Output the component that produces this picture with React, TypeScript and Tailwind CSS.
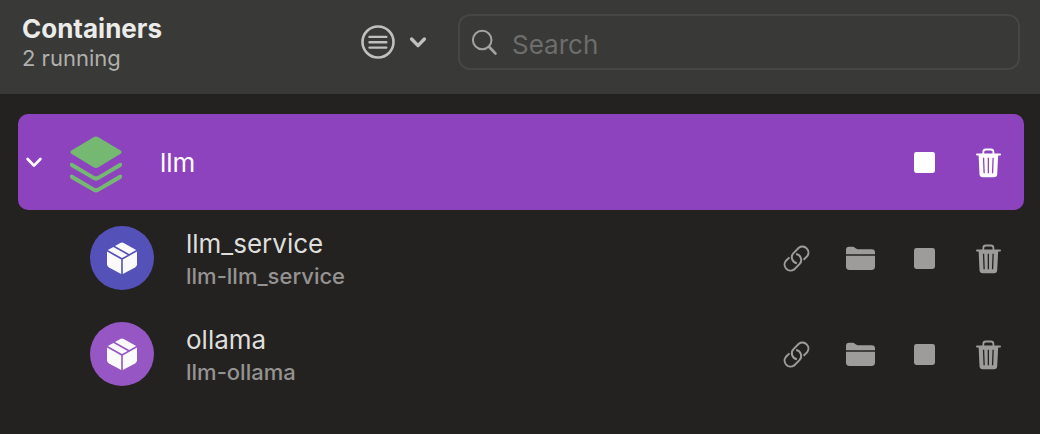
import React from "react";

type IconProps = { className?: string };

function FilterIcon() {
  return (
    <svg width="36" height="36" viewBox="0 0 36 36" fill="none" stroke="currentColor" strokeLinecap="round" aria-hidden="true">
      <circle cx="18" cy="18" r="15.5" strokeWidth="2.6" />
      <path d="M9.5 12.9h16.8M9.5 18.3h16.8M9.5 23.6h16.8" strokeWidth="2.4" />
    </svg>
  );
}

function ChevronIcon({ weight }: { weight: number }) {
  return (
    <svg width="18" height="18" viewBox="0 0 18 18" fill="none" stroke="currentColor" strokeLinecap="round" strokeLinejoin="round" strokeWidth={weight} aria-hidden="true">
      <path d="M2.6 6 9 12.6l6.4-6.6" />
    </svg>
  );
}

function SearchIcon() {
  return (
    <svg width="28" height="28" viewBox="0 0 28 28" fill="none" stroke="currentColor" strokeLinecap="round" aria-hidden="true">
      <circle cx="12.2" cy="12" r="9.3" strokeWidth="2" />
      <path d="M19.2 19l6.2 6.4" strokeWidth="2.8" />
    </svg>
  );
}

function StackIcon() {
  return (
    <svg width="56" height="60" viewBox="0 0 56 60" fill="#74b872" aria-hidden="true">
      <path d="M25.6 3.2Q28 1.8 30.4 3.2L52.6 16.5Q54.6 18 52.6 19.8L30.4 33.2Q28 34.6 25.6 33.2L3.4 19.8Q1.4 18 3.4 16.5Z" />
      <path d="M2 29.4Q3.2 28.2 5 29.2L26.3 41.9Q28 42.8 29.7 41.9L51 29.2Q52.8 28.2 54 29.4V31.2Q54 32.3 52.8 33.1L30.4 46Q28 47.4 25.6 46L3.2 33.1Q2 32.3 2 31.2Z" />
      <path d="M2 41.2Q3.2 40 5 41L26.3 53.7Q28 54.6 29.7 53.7L51 41Q52.8 40 54 41.2V43Q54 44.1 52.8 44.9L30.4 57.8Q28 59.2 25.6 57.8L3.2 44.9Q2 44.1 2 43Z" />
    </svg>
  );
}

function BoxIcon() {
  return (
    <svg width="32" height="34" viewBox="0 0 32 34" fill="#fafafa" aria-hidden="true">
      <path d="M1 10.6 15.2 18.4V33L3 26.4Q1 25.3 1 23.2Z" />
      <path d="M31 10.6 16.8 18.4V33L29 26.4Q31 25.3 31 23.2Z" />
      <path d="M1.8 9 7.4 5.9 21.6 13.9 16 17Z" />
      <path d="M9 5 14.3 2Q16 1 17.7 2L30.2 9 23.2 13Z" />
    </svg>
  );
}

function LinkIcon({ className }: IconProps) {
  return (
    <svg width="32" height="32" viewBox="0 0 32 32" className={className} fill="none" stroke="currentColor" strokeWidth="2" aria-hidden="true">
      <path d="M23.6 17.8 27.2 14.2A6 6 0 0 0 18.8 5.8L13.5 11.1A6 6 0 0 0 16.9 21.2" />
      <path d="M9.4 15.4 5.8 19A6 6 0 0 0 14.2 27.4L19.5 22.1A6 6 0 0 0 16.1 12" />
    </svg>
  );
}

function FolderIcon({ className }: IconProps) {
  return (
    <svg width="32" height="32" viewBox="0 0 32 32" className={className} fill="currentColor" aria-hidden="true">
      <path d="M2 12.2V7.8Q2 4.8 5 4.8H8.6Q10 4.8 11 5.7L12 6.5Q12.8 7.2 14 7.2H27.8Q31 7.2 31 10.2V12.2Z" />
      <path d="M2 13.8H31V24.6Q31 28 27.6 28H5.4Q2 28 2 24.6Z" />
    </svg>
  );
}

function StopIcon({ className }: IconProps) {
  return (
    <svg width="32" height="32" viewBox="0 0 32 32" className={className} fill="currentColor" aria-hidden="true">
      <rect x="6" y="6" width="21" height="21" rx="2.4" />
    </svg>
  );
}

function TrashIcon({ className }: IconProps) {
  return (
    <svg width="32" height="32" viewBox="0 0 32 32" className={className} aria-hidden="true">
      <path d="M11.3 8V6Q11.3 3.5 13.8 3.5H18.9Q21.4 3.5 21.4 6V8" fill="none" stroke="currentColor" strokeWidth="1.8" />
      <path d="M5 8.6h23" stroke="currentColor" strokeWidth="2" strokeLinecap="round" />
      <path
        fill="currentColor"
        fillRule="evenodd"
        d="M6.6 8.6H26.2L25.2 28.2Q25 31.2 22 31.2H10.7Q7.7 31.2 7.5 28.2ZM10.9 11.7 11.5 27.2h1.3L12.2 11.7ZM15.7 11.7V27.2H17V11.7ZM20.5 11.7 19.9 27.2h1.3L21.8 11.7Z"
      />
    </svg>
  );
}

function IconButton({ label, children }: { label: string; children: React.ReactNode }) {
  return (
    <button type="button" aria-label={label} title={label} className="flex size-8 items-center justify-center">
      {children}
    </button>
  );
}

type Container = { name: string; image: string; tint: string };

const containers: Container[] = [
  { name: "llm_service", image: "llm-llm_service", tint: "bg-[#5452b8]" },
  { name: "ollama", image: "llm-ollama", tint: "bg-[#9656c4]" },
];

function ContainerRow({ name, image, tint }: Container) {
  return (
    <li className="flex h-24 items-center pr-5 pl-[72px]">
      <span className={`flex size-16 shrink-0 items-center justify-center rounded-full ${tint}`}>
        <BoxIcon />
      </span>
      <div className="ml-8 min-w-0 flex-1 pt-1">
        <p className="truncate text-[26px] leading-8 text-[#dededc]">{name}</p>
        <p className="truncate text-[22px] leading-8 font-medium text-[#949391]">{image}</p>
      </div>
      <div className="flex gap-8 text-[#9d9c9a]">
        <IconButton label={`Open ${name} link`}>
          <LinkIcon />
        </IconButton>
        <IconButton label={`Open ${name} files`}>
          <FolderIcon />
        </IconButton>
        <IconButton label={`Stop ${name}`}>
          <StopIcon />
        </IconButton>
        <IconButton label={`Delete ${name}`}>
          <TrashIcon />
        </IconButton>
      </div>
    </li>
  );
}

export default function App() {
  return (
    <div className="min-h-screen bg-[#242220] font-['Inter','Liberation_Sans',sans-serif]">
      <header className="flex h-[94px] items-start bg-[#393937] pr-5 pl-[22px]">
        <div className="w-[338px] shrink-0 pt-[14px]">
          <h1 className="text-[26px] leading-[30px] font-bold text-[#ebebe9]">Containers</h1>
          <p className="text-[22px] leading-7 text-[#b0b0ae]">2 running</p>
        </div>
        <button type="button" aria-label="Filter containers" className="mt-6 flex shrink-0 items-center gap-[13px] text-[#c0c0be]">
          <FilterIcon />
          <ChevronIcon weight={3.4} />
        </button>
        <label className="mt-[14px] ml-[31px] flex h-14 min-w-0 flex-1 items-center gap-[14px] rounded-xl border-2 border-[#464644] pr-3 pl-[10px] text-[#a3a3a1]">
          <SearchIcon />
          <input
            type="search"
            aria-label="Search"
            placeholder="Search"
            className="min-w-0 flex-1 bg-transparent pt-1 text-[26px] text-[#ebebe9] outline-none placeholder:text-[#6d6d6b]"
          />
        </label>
      </header>

      <main className="px-4 pt-5 pl-[18px]">
        <section className="flex h-24 items-center rounded-[10px] bg-[#8d42be] pr-5 pl-[7px] text-white">
          <button type="button" aria-label="Collapse llm" aria-expanded="true">
            <ChevronIcon weight={2.7} />
          </button>
          <span className="mt-1 ml-[25px]">
            <StackIcon />
          </span>
          <h2 className="ml-9 min-w-0 flex-1 truncate pt-0.5 text-[26px] leading-8">llm</h2>
          <div className="flex gap-8">
            <IconButton label="Stop llm">
              <StopIcon />
            </IconButton>
            <IconButton label="Delete llm">
              <TrashIcon />
            </IconButton>
          </div>
        </section>
        <ul>
          {containers.map((container) => (
            <ContainerRow key={container.name} {...container} />
          ))}
        </ul>
      </main>
    </div>
  );
}
